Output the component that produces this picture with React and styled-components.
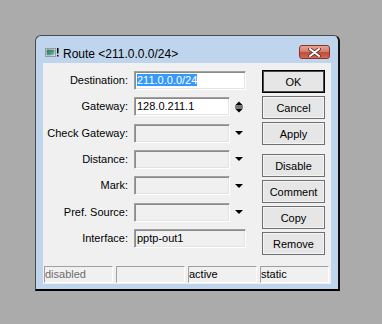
import React from 'react';
import styled, { createGlobalStyle } from 'styled-components';

const Global = createGlobalStyle`
  html, body { margin: 0; padding: 0; background: #ababab; }
  body { font-family: "Liberation Sans", Arial, sans-serif; }
`;

const Desktop = styled.div`
  width: 382px;
  height: 324px;
  box-sizing: border-box;
  padding: 35px 0 0 35px;
  background: #ababab;
`;

const Window = styled.div`
  width: 305px;
  box-sizing: border-box;
  display: flex;
  flex-direction: column;
  background: #bfd5ee;
  border: 1px solid #4a4a4a;
  border-right: 2px solid #111;
  border-bottom: 2px solid #000;
  border-radius: 6px 6px 0 0;
`;

const TitleBar = styled.div`
  height: 27px;
  box-sizing: border-box;
  display: flex;
  align-items: flex-start;
  padding: 9px 8px 0 9px;
`;

const TitleIcon = styled.svg`
  margin-top: 3px;
  flex: none;
`;

const Title = styled.div`
  margin: 2px 0 0 3px;
  font-size: 12px;
  line-height: 15px;
  color: #000;
  white-space: nowrap;
`;

const CloseButton = styled.div`
  margin-left: auto;
  width: 31px;
  height: 14px;
  box-sizing: border-box;
  border: 1px solid #8a3328;
  border-radius: 3px;
  background: linear-gradient(#e7a497 0%, #d87d6c 45%, #c24b39 55%, #cf6a56 100%);
  display: flex;
  align-items: center;
  justify-content: center;
`;

const FrameBody = styled.div`
  padding: 0 7px 5px 7px;
`;

const Client = styled.div`
  height: 221px;
  box-sizing: border-box;
  background: #f0f0f0;
  padding: 7px 0 1px 0;
  display: flex;
  flex-direction: column;
`;

const Main = styled.div`
  height: 185px;
  display: flex;
  gap: 16px;
  padding-right: 6px;
`;

const Form = styled.div`
  margin-top: 1px;
  display: grid;
  grid-template-columns: 85px 112px;
  column-gap: 6px;
  grid-auto-rows: 19px;
  row-gap: 7.33px;
  align-content: start;
`;

const Label = styled.div`
  text-align: right;
  font-size: 11px;
  line-height: 19px;
  color: #000;
  white-space: nowrap;
`;

const FieldRow = styled.div`
  display: flex;
  align-items: center;
`;

const Field = styled.div`
  width: ${p => p.$w}px;
  height: 19px;
  box-sizing: border-box;
  border: 1px solid;
  border-color: #a0a0a0 #ffffff #ffffff #a0a0a0;
  box-shadow: inset 1px 1px 0 #8a8a8a, inset -1px -1px 0 #e3e3e3;
  background: ${p => (p.$white ? '#ffffff' : '#f0f0f0')};
  padding-left: 2px;
  font-size: 11px;
  line-height: 17px;
  color: #000;
  white-space: nowrap;
  overflow: hidden;
`;

const Selected = styled.span`
  background: #3399ff;
  color: #fff;
`;

const Arrow = styled.svg`
  margin-left: 5px;
  flex: none;
`;

const Buttons = styled.div`
  display: flex;
  flex-direction: column;
  gap: 3px;
`;

const Button = styled.div`
  width: 63px;
  height: 23px;
  box-sizing: border-box;
  margin-top: ${p => p.$extra || 0}px;
  border: 1px solid ${p => (p.$default ? '#000' : '#707070')};
  box-shadow: ${p => (p.$default ? 'inset 0 0 0 1px #4a4a4a' : 'inset 0 0 0 1px #f4f4f4')};
  background: #e6e6e6;
  display: flex;
  align-items: center;
  justify-content: center;
  font-size: 11px;
  color: #000;
`;

const StatusBar = styled.div`
  margin-top: 11px;
  padding-left: 1px;
  display: flex;
  gap: 3px;
`;

const StatusBox = styled.div`
  width: 69px;
  flex: none;
  height: 17px;
  box-sizing: border-box;
  border: 1px solid;
  border-color: #a0a0a0 #ffffff #ffffff #a0a0a0;
  font-size: 11px;
  line-height: 15px;
  color: ${p => (p.$dim ? '#6d6d6d' : '#000')};
  white-space: nowrap;
`;

const DropArrow = () => (
  <Arrow width="8" height="4" viewBox="0 0 8 4">
    <polygon points="0,0 8,0 4,4" fill="#000" />
  </Arrow>
);

const Spinner = () => (
  <Arrow width="8" height="12" viewBox="0 0 8 12">
    <polygon points="0,4.5 4,0.5 8,4.5" fill="#000" />
    <rect x="0" y="5.5" width="8" height="1" fill="#000" />
    <polygon points="0,7.5 8,7.5 4,11.5" fill="#000" />
  </Arrow>
);

const rows = [
  { label: 'Destination:', kind: 'text', value: '211.0.0.0/24', selected: true },
  { label: 'Gateway:', kind: 'spin', value: '128.0.211.1' },
  { label: 'Check Gateway:', kind: 'drop' },
  { label: 'Distance:', kind: 'drop' },
  { label: 'Mark:', kind: 'drop' },
  { label: 'Pref. Source:', kind: 'drop' },
  { label: 'Interface:', kind: 'ro', value: 'pptp-out1' },
];

const buttons = [
  { t: 'OK', def: true },
  { t: 'Cancel' },
  { t: 'Apply' },
  { t: 'Disable', extra: 6 },
  { t: 'Comment' },
  { t: 'Copy' },
  { t: 'Remove' },
];

export default function App() {
  return (
    <>
      <Global />
      <Desktop>
        <Window>
          <TitleBar>
            <TitleIcon width="15" height="9" viewBox="0 0 15 9">
              <defs>
                <linearGradient id="ig" x1="0" x2="1" y1="0" y2="1">
                  <stop offset="0" stopColor="#2e6f5c" />
                  <stop offset="0.6" stopColor="#4f9a8c" />
                  <stop offset="1" stopColor="#9cc9d8" />
                </linearGradient>
              </defs>
              <rect x="0.5" y="0.5" width="10" height="8" fill="#f2f2f2" stroke="#9a9a9a" />
              <rect x="1.5" y="1.5" width="8" height="6" fill="url(#ig)" />
              <rect x="12" y="0" width="1.5" height="5.5" fill="#000" />
              <rect x="12" y="7" width="1.5" height="1.5" fill="#000" />
            </TitleIcon>
            <Title>Route &lt;211.0.0.0/24&gt;</Title>
            <CloseButton>
              <svg width="13" height="9" viewBox="0 0 13 9">
                <path d="M2 1 L11 8 M11 1 L2 8" stroke="#5a2a24" strokeWidth="3.6" strokeLinecap="round" />
                <path d="M2 1 L11 8 M11 1 L2 8" stroke="#ffffff" strokeWidth="2" strokeLinecap="round" />
              </svg>
            </CloseButton>
          </TitleBar>
          <FrameBody>
            <Client>
              <Main>
                <Form>
                  {rows.map(r => (
                    <React.Fragment key={r.label}>
                      <Label>{r.label}</Label>
                      <FieldRow>
                        {r.kind === 'text' && (
                          <Field $w={112} $white>
                            {r.selected ? <Selected>{r.value}</Selected> : r.value}
                          </Field>
                        )}
                        {r.kind === 'spin' && (
                          <>
                            <Field $w={96} $white>{r.value}</Field>
                            <Spinner />
                          </>
                        )}
                        {r.kind === 'drop' && (
                          <>
                            <Field $w={96} />
                            <DropArrow />
                          </>
                        )}
                        {r.kind === 'ro' && <Field $w={112}>{r.value}</Field>}
                      </FieldRow>
                    </React.Fragment>
                  ))}
                </Form>
                <Buttons>
                  {buttons.map(b => (
                    <Button key={b.t} $default={b.def} $extra={b.extra}>{b.t}</Button>
                  ))}
                </Buttons>
              </Main>
              <StatusBar>
                <StatusBox $dim>disabled</StatusBox>
                <StatusBox />
                <StatusBox>active</StatusBox>
                <StatusBox>static</StatusBox>
              </StatusBar>
            </Client>
          </FrameBody>
        </Window>
      </Desktop>
    </>
  );
}
